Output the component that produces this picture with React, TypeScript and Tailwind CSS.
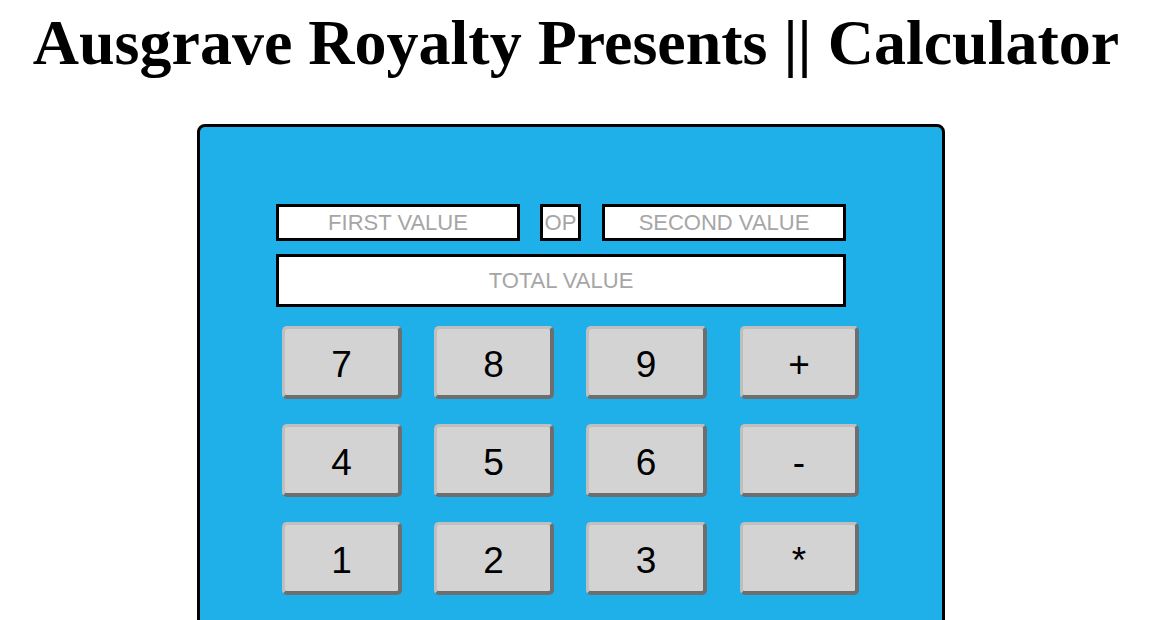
import * as React from "react";

const keys = ["7", "8", "9", "+", "4", "5", "6", "-", "1", "2", "3", "*"];

const Field: React.FC<{ placeholder: string; className: string }> = ({ placeholder, className }) => (
  <input
    type="text"
    placeholder={placeholder}
    className={`border-[3px] border-black bg-white text-center text-[22px] text-black outline-none placeholder:text-[#a6a6a6] ${className}`}
    style={{ fontFamily: '"Liberation Sans", Arial, sans-serif' }}
  />
);

const App: React.FC = () => {
  return (
    <div className="min-h-[620px] bg-white overflow-hidden">
      <h1 className="text-center text-[64px] font-bold leading-none pt-[11px] font-['Liberation_Serif',serif] text-black">
        Ausgrave Royalty Presents || Calculator
      </h1>
      <div className="ml-[197px] mt-[49px] w-[748px] h-[520px] rounded-[8px] border-[3px] border-black bg-[#1fb0ea] pt-[77px] pl-[76px]">
        <div className="flex">
          <Field placeholder="FIRST VALUE" className="w-[244px] h-[37px]" />
          <Field placeholder="OP" className="ml-[20px] w-[41px] h-[37px] px-0" />
          <Field placeholder="SECOND VALUE" className="ml-[21px] w-[244px] h-[37px]" />
        </div>
        <Field placeholder="TOTAL VALUE" className="mt-[13px] w-[570px] h-[53px]" />
        <div className="grid grid-cols-[120px_120px_121px_120px] gap-x-[32px] gap-y-[25px] mt-[19px] ml-[6px]">
          {keys.map((k, i) => (
            <button
              key={k}
              className={`h-[73px] pt-[5px] rounded-[5px] bg-[#d3d3d3] border-t-[3px] border-l-[3px] border-t-[#bfbfbf] border-l-[#bfbfbf] border-r-4 border-b-4 border-r-[#6e6e6e] border-b-[#6e6e6e] text-[37px] text-black font-['Liberation_Sans',Arial,sans-serif] ${i % 4 === 3 ? "ml-[1px]" : ""}`}
            >
              {k}
            </button>
          ))}
        </div>
      </div>
    </div>
  );
};

export default App;
